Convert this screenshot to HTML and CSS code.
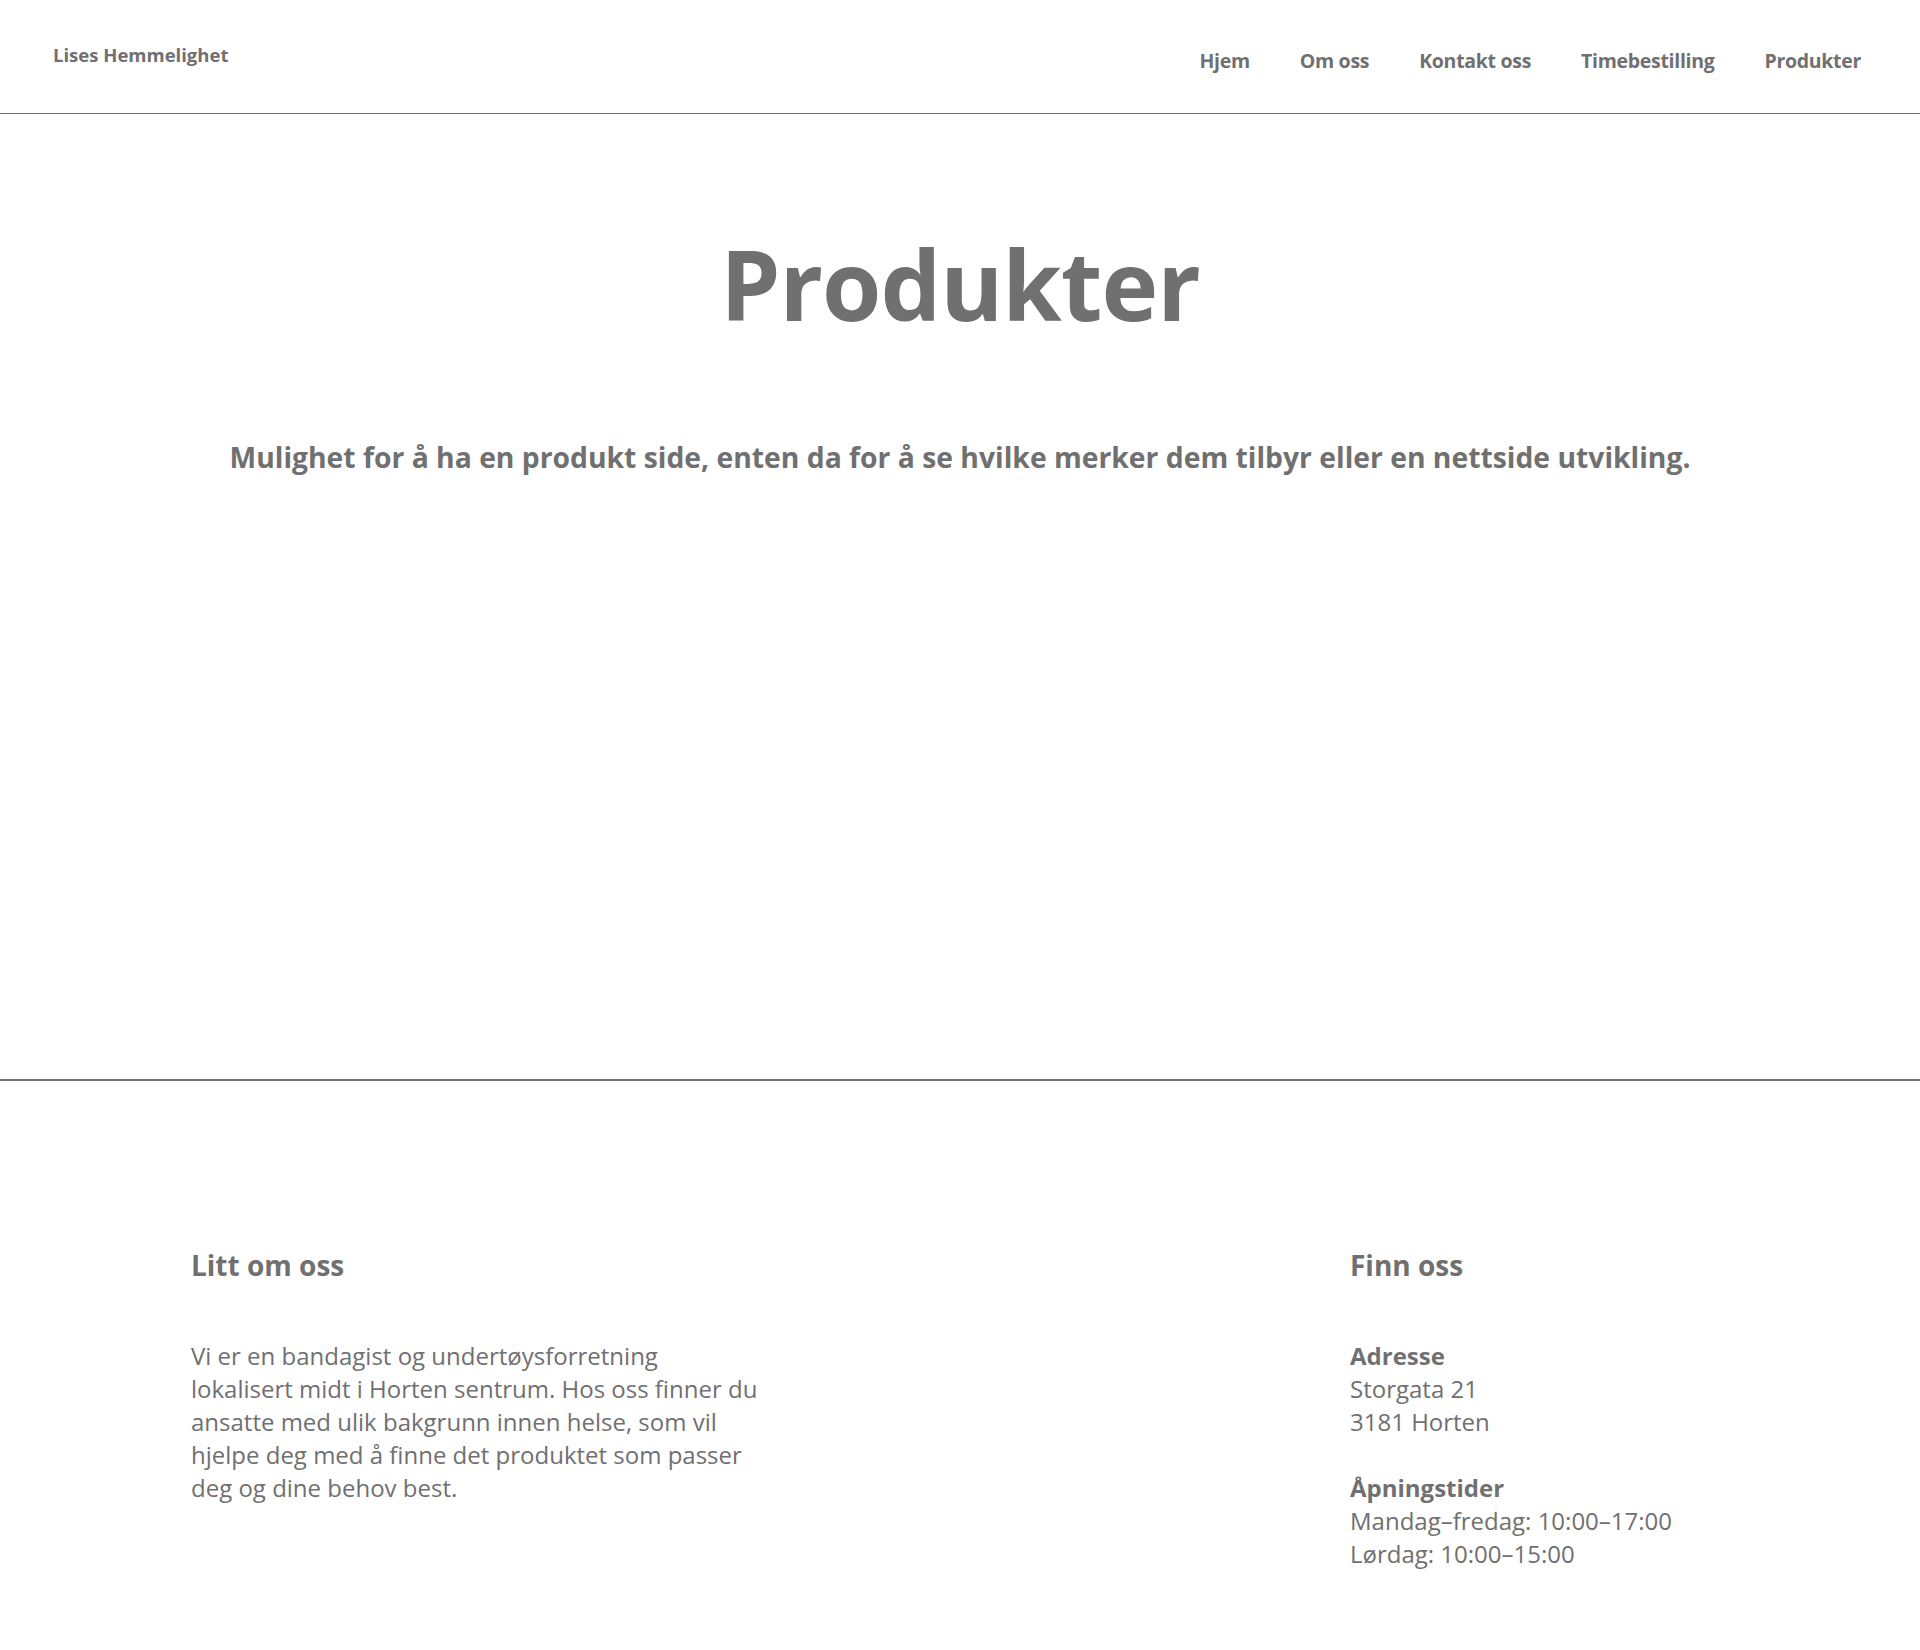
FILE: index.html
```html
<!DOCTYPE html>
<html lang="no">
<head>
<meta charset="utf-8">
<title>Produkter - Lises Hemmelighet</title>
<link rel="stylesheet" href="styles.css">
</head>
<body>
<header class="site-header">
  <div class="logo">Lises Hemmelighet</div>
  <nav class="nav">
    <a href="#">Hjem</a>
    <a href="#">Om oss</a>
    <a href="#">Kontakt oss</a>
    <a href="#">Timebestilling</a>
    <a href="#">Produkter</a>
  </nav>
</header>
<main class="main">
  <h1 class="title">Produkter</h1>
  <p class="lead">Mulighet for å ha en produkt side, enten da for å se hvilke merker dem tilbyr eller en nettside utvikling.</p>
</main>
<footer class="footer">
  <section class="col col-left">
    <h2 class="col-title">Litt om oss</h2>
    <p class="text">Vi er en bandagist og undertøysforretning<br>lokalisert midt i Horten sentrum. Hos oss finner du<br>ansatte med ulik bakgrunn innen helse, som vil<br>hjelpe deg med å finne det produktet som passer<br>deg og dine behov best.</p>
  </section>
  <section class="col col-right">
    <h2 class="col-title">Finn oss</h2>
    <p class="text"><strong>Adresse</strong><br>Storgata 21<br>3181 Horten</p>
    <p class="text"><strong>Åpningstider</strong><br>Mandag–fredag: 10:00–17:00<br>Lørdag: 10:00–15:00</p>
  </section>
</footer>
</body>
</html>
```
FILE: styles.css
```css
* { box-sizing: border-box; }
html, body { margin: 0; padding: 0; background: #fff; }
body {
  font-family: "Open Sans", "Noto Sans", sans-serif;
  color: #707070;
  height: 1650px;
}
.site-header {
  height: 114px;
  border-bottom: 1px solid #707070;
  display: flex;
  justify-content: space-between;
  padding: 0 59px 0 53px;
}
.logo {
  font-size: 18.5px;
  font-weight: 700;
  padding-top: 42px;
}
.nav {
  display: flex;
  gap: 50px;
  padding-top: 47px;
}
.nav a {
  color: #707070;
  text-decoration: none;
  font-weight: 700;
  font-size: 19.5px;
  letter-spacing: -0.3px;
}
.main {
  height: 965px;
  text-align: center;
  padding-top: 122px;
}
.title {
  margin: 0;
  font-size: 96px;
  line-height: 1;
  font-weight: 700;
  letter-spacing: -1px;
}
.lead {
  margin: 106px 0 0;
  font-size: 28.3px;
  font-weight: 700;
}
.footer {
  border-top: 2px solid #707070;
  display: flex;
  justify-content: space-between;
  padding: 165px 0 0 191px;
}
.col-left { width: 620px; }
.col-right { width: 570px; }
.col-title {
  margin: 0 0 55px;
  font-size: 28px;
  font-weight: 700;
}
.text {
  margin: 0 0 33px;
  font-size: 24px;
  line-height: 33px;
}
```
